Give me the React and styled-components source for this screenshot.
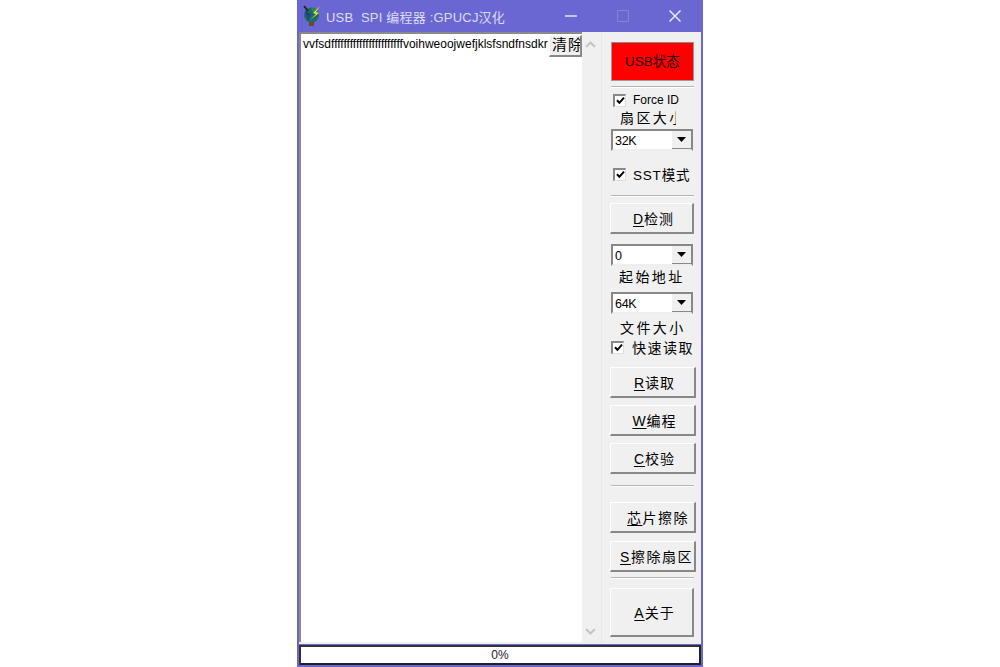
import React from 'react'
import styled, { createGlobalStyle } from 'styled-components'

const Global = createGlobalStyle`
  html, body {
    margin: 0;
    padding: 0;
    background: #fff;
  }
  body {
    font-family: "Liberation Sans", "Noto Sans CJK SC", sans-serif;
  }
`

const Page = styled.div`
  width: 1000px;
  height: 667px;
  display: flex;
  justify-content: center;
  overflow: hidden;
`

const Win = styled.div`
  width: 406px;
  height: 667px;
  box-sizing: border-box;
  display: flex;
  flex-direction: column;
  background: #6b67d2;
  padding: 0 2px 2px;
`

const TitleBar = styled.div`
  height: 32px;
  flex: none;
  display: flex;
  align-items: center;
  color: #dddcf6;
  font-size: 13px;
  padding-left: 3px;
`

const Title = styled.span`
  margin-left: 4px;
  letter-spacing: 0.2px;
  white-space: pre;
`

const WinButtons = styled.div`
  margin-left: auto;
  display: flex;
  align-items: center;
`

const WinButton = styled.div`
  width: 52px;
  height: 32px;
  display: flex;
  align-items: center;
  justify-content: center;
`

const Body = styled.div`
  flex: 1;
  min-height: 0;
  display: flex;
  background: #f0f0f0;
`

const LogArea = styled.div`
  position: relative;
  width: 283px;
  height: 610px;
  flex: none;
  box-sizing: border-box;
  background: #fff;
  border-top: 2px solid #8a8a8a;
  border-left: 2px solid #8a8a8a;
  padding: 2px 0 0 2px;
  font-size: 12px;
  line-height: 16px;
  color: #000;
  overflow: hidden;
  white-space: nowrap;
`

const ClearButton = styled.div`
  position: absolute;
  top: 1px;
  right: 0;
  width: 33px;
  height: 22px;
  box-sizing: border-box;
  padding-left: 2px;
  background: #f0f0f0;
  border-right: 2px solid #888;
  border-bottom: 2px solid #888;
  border-top: 1px solid #fff;
  border-left: 1px solid #fff;
  font-size: 15px;
  line-height: 18px;
  letter-spacing: 1px;
  white-space: nowrap;
  overflow: hidden;
`

const ScrollBar = styled.div`
  width: 19px;
  height: 610px;
  flex: none;
  display: flex;
  flex-direction: column;
  justify-content: space-between;
  align-items: center;
  padding: 9px 2px 7px 0;
  box-sizing: border-box;
`

const Side = styled.div`
  width: 102px;
  flex: none;
  display: flex;
  flex-direction: column;
  padding-left: 9px;
  box-sizing: border-box;
  font-size: 14px;
  color: #000;
  border-left: 1px solid #e8e8e8;
`

const StatusBox = styled.div`
  width: 83px;
  height: 39px;
  margin-top: 10px;
  padding-bottom: 3px;
  flex: none;
  box-sizing: border-box;
  background: #ff0000;
  border: 1px solid #9a9a9a;
  border-top-color: #8a8a8a;
  color: #2a0000;
  display: flex;
  align-items: center;
  justify-content: center;
  font-size: 13.5px;
`

const Sep = styled.div`
  width: 83px;
  flex: none;
  height: 1px;
  background: #b4b4b4;
  margin-top: ${p => p.$top}px;
  border-bottom: 1px solid #fff;
`

const CheckRow = styled.div`
  display: flex;
  align-items: center;
  height: 16px;
  flex: none;
  margin-top: ${p => p.$top}px;
  margin-left: ${p => p.$left}px;
  gap: ${p => p.$gap}px;
  letter-spacing: ${p => p.$spacing || 0}px;
  white-space: nowrap;
  font-size: ${p => p.$size || 14}px;
`

const Tick = styled.span`
  width: 13px;
  height: 13px;
  flex: none;
  box-sizing: border-box;
  background: #fff;
  border-top: 2px solid #888;
  border-left: 2px solid #888;
  border-right: 1px solid #ddd;
  border-bottom: 1px solid #ddd;
  display: flex;
  align-items: center;
  justify-content: center;
`

const Label = styled.div`
  flex: none;
  margin-top: ${p => p.$top}px;
  margin-left: ${p => p.$left}px;
  width: ${p => p.$w}px;
  height: 16px;
  line-height: 16px;
  overflow: hidden;
  white-space: nowrap;
  letter-spacing: 2.4px;
  font-size: 14px;
`

const Combo = styled.div`
  width: 82px;
  height: 22px;
  flex: none;
  margin-top: ${p => p.$top}px;
  box-sizing: border-box;
  display: flex;
  background: #fff;
  border-top: 2px solid #888;
  border-left: 2px solid #888;
  border-right: 2px solid #888;
  border-bottom: 2px solid #eee;
  font-size: 12.5px;
  line-height: 21px;
  padding-left: 2px;
  letter-spacing: -0.3px;
`

const ComboArrow = styled.span`
  margin-left: auto;
  width: 19px;
  background: #f0f0f0;
  border-bottom: 1px solid #888;
  display: flex;
  align-items: center;
  justify-content: center;
`

const Btn = styled.div`
  width: ${p => p.$w || 86}px;
  height: ${p => p.$h || 31}px;
  flex: none;
  margin-top: ${p => p.$top}px;
  margin-left: -1px;
  box-sizing: border-box;
  background: #f0f0f0;
  border-top: 1px solid #fff;
  border-left: 1px solid #fff;
  border-right: 2px solid #888;
  border-bottom: 2px solid #888;
  display: flex;
  align-items: center;
  justify-content: center;
  font-size: 14px;
  letter-spacing: ${p => p.$spacing || 1}px;
  white-space: nowrap;
  padding-left: ${p => p.$pad || 4}px;
  u {
    text-underline-offset: 2px;
  }
`

const Progress = styled.div`
  height: 20px;
  flex: none;
  margin-top: 1px;
  background: #fff;
  box-sizing: border-box;
  border: 2px solid;
  border-color: #333 #222 #222 #333;
  font-size: 12px;
  line-height: 16px;
  text-align: center;
  color: #222;
`

const CheckMark = () => (
  <svg width="9" height="9" viewBox="0 0 9 9">
    <path d="M1 4.2 L3.4 6.8 L8 1.6" fill="none" stroke="#000" strokeWidth="2" />
  </svg>
)

const Arrow = () => (
  <svg width="9" height="5" viewBox="0 0 9 5">
    <path d="M0 0 H9 L4.5 5 Z" fill="#000" />
  </svg>
)

const Chevron = ({ up }) => (
  <svg width="11" height="7" viewBox="0 0 11 7">
    <path d={up ? 'M1 6 L5.5 1.5 L10 6' : 'M1 1 L5.5 5.5 L10 1'} fill="none" stroke="#c4c4c4" strokeWidth="2" />
  </svg>
)

const AppIcon = () => (
  <svg width="20" height="22" viewBox="0 0 20 22">
    <path d="M7 16 L7 21 L12 21 L12 16 Z" fill="#6a4a2a" />
    <circle cx="9.5" cy="10" r="7.5" fill="#1e6a66" />
    <path d="M3 6 L9 9 L6 16 Z" fill="#25408f" />
    <path d="M9 3 L14 4 L12 9 Z" fill="#2f8f3a" />
    <path d="M2 1 L6 6" stroke="#222" strokeWidth="2" />
    <path d="M18 1 L11 8 L14 9 L8 15 L17 8 L14 7 Z" fill="#e8e23a" />
  </svg>
)

function App() {
  return (
    <Page>
      <Global />
      <Win>
        <TitleBar>
          <AppIcon />
          <Title>USB  SPI 编程器 :GPUCJ汉化</Title>
          <WinButtons>
            <WinButton>
              <svg width="12" height="2" viewBox="0 0 12 2">
                <path d="M0 1 H12" stroke="#eeeefa" strokeWidth="1.4" />
              </svg>
            </WinButton>
            <WinButton>
              <svg width="12" height="12" viewBox="0 0 12 12">
                <rect x="0.5" y="0.5" width="11" height="11" fill="none" stroke="#8582dc" />
              </svg>
            </WinButton>
            <WinButton>
              <svg width="12" height="12" viewBox="0 0 12 12">
                <path d="M0.5 0.5 L11.5 11.5 M11.5 0.5 L0.5 11.5" stroke="#f2f2fb" strokeWidth="1.4" />
              </svg>
            </WinButton>
          </WinButtons>
        </TitleBar>
        <Body>
          <LogArea>
            vvfsdfffffffffffffffffffffffvoihweoojwefjklsfsndfnsdkr
            <ClearButton>清除</ClearButton>
          </LogArea>
          <ScrollBar>
            <Chevron up />
            <Chevron />
          </ScrollBar>
          <Side>
            <StatusBox>USB状态</StatusBox>
            <Sep $top={5} />
            <CheckRow $top={4} $left={2} $gap={7} $size={12}>
              <Tick><CheckMark /></Tick>
              Force ID
            </CheckRow>
            <Label $top={2} $left={9} $w={56}>扇区大小</Label>
            <Combo $top={3}>
              32K
              <ComboArrow><Arrow /></ComboArrow>
            </Combo>
            <CheckRow $top={15} $left={2} $gap={7} $spacing={0.8} $size={13.5}>
              <Tick><CheckMark /></Tick>
              SST模式
            </CheckRow>
            <Sep $top={13} />
            <Btn $top={6} $w={84}><span><u>D</u>检测</span></Btn>
            <Combo $top={10}>
              0
              <ComboArrow><Arrow /></ComboArrow>
            </Combo>
            <Label $top={3} $left={8} $w={70}>起始地址</Label>
            <Combo $top={7}>
              64K
              <ComboArrow><Arrow /></ComboArrow>
            </Combo>
            <Label $top={6} $left={9} $w={70}>文件大小</Label>
            <CheckRow $top={3} $left={0} $gap={8} $spacing={1.5}>
              <Tick><CheckMark /></Tick>
              快速读取
            </CheckRow>
            <Btn $top={12}><span><u>R</u>读取</span></Btn>
            <Btn $top={7}><span><u>W</u>编程</span></Btn>
            <Btn $top={7}><span><u>C</u>校验</span></Btn>
            <Sep $top={11} />
            <Btn $top={15} $pad={11} $spacing={1.5}><span><u>芯</u>片擦除</span></Btn>
            <Btn $top={8} $pad={8} $spacing={1.5}><span><u>S</u>擦除扇区</span></Btn>
            <Sep $top={5} />
            <Btn $top={9} $w={84} $h={49} $pad={6}><span><u>A</u>关于</span></Btn>
          </Side>
        </Body>
        <Progress>0%</Progress>
      </Win>
    </Page>
  )
}

export default App
